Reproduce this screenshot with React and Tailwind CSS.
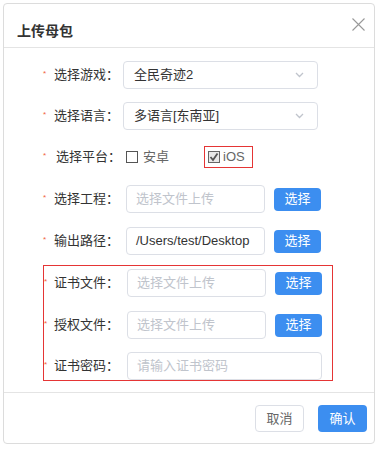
import React from "react";

const font = { fontFamily: '"Liberation Sans", "Noto Sans CJK SC", sans-serif' };

function Star({ w = "w-[11px]" }) {
  return (
    <span className={`${w} shrink-0 self-start pt-[9px] text-[8px] leading-[8px] text-[#f0643c]`}>*</span>
  );
}

function Chevron() {
  return (
    <svg width="9" height="6" viewBox="0 0 9 6" className="mr-[13px]">
      <polyline points="1,1 4.5,4.5 8,1" fill="none" stroke="#c0c4cc" strokeWidth="1.3" />
    </svg>
  );
}

function SelectBtn() {
  return (
    <button className="ml-[9px] flex h-[23px] w-[47px] items-center justify-center rounded-[4px] bg-[#3c8ef0] text-[13px] text-white">
      选择
    </button>
  );
}

function Input({ text, placeholder, w = "w-[139px]" }) {
  return (
    <div className={`flex h-[28px] ${w} items-center rounded-[4px] border border-[#dcdfe6] pl-[9px] text-[13px]`}>
      {text ? <span className="text-[#333]">{text}</span> : <span className="text-[#c0c4cc]">{placeholder}</span>}
    </div>
  );
}

export default function App() {
  return (
    <div className="h-[451px] w-[380px] bg-white pl-[3px] pt-[3px]" style={font}>
      <div className="flex h-[441px] w-[372px] flex-col rounded-[4px] border border-[#dcdcdc] bg-white">
        {/* header */}
        <div className="flex h-[44px] items-start justify-between border-b border-[#e4e4e4]">
          <div className="pl-[13px] pt-[17px] text-[14px] font-bold leading-[20px] text-[#333]">上传母包</div>
          <svg width="13" height="13" viewBox="0 0 13 13" className="mr-[9px] mt-[14px]">
            <path d="M0.5 0.5 L12.5 12.5 M12.5 0.5 L0.5 12.5" stroke="#999" strokeWidth="1.1" />
          </svg>
        </div>

        {/* body */}
        <div className="flex flex-col pl-[39px] pt-[13px] text-[13px] text-[#333]">
          <div className="flex h-[28px] items-center">
            <Star />
            <span className="w-[69px]">选择游戏：</span>
            <div className="flex h-[28px] w-[195px] items-center justify-between rounded-[4px] border border-[#dcdfe6] pl-[10px]">
              <span>全民奇迹2</span>
              <Chevron />
            </div>
          </div>

          <div className="mt-[13px] flex h-[28px] items-center">
            <Star />
            <span className="w-[69px]">选择语言：</span>
            <div className="flex h-[28px] w-[195px] items-center justify-between rounded-[4px] border border-[#dcdfe6] pl-[10px]">
              <span>多语言[东南亚]</span>
              <Chevron />
            </div>
          </div>

          <div className="mt-[13px] flex h-[28px] items-center">
            <Star />
            <span className="w-[72px] pl-[2px]">选择平台：</span>
            <span className="h-[12px] w-[12px] border border-[#555] bg-white"></span>
            <span className="ml-[5px] text-[#666]">安卓</span>
            <div className="ml-[35px] flex h-[22px] w-[49px] items-center border border-[#e53535] pl-[3px]">
              <span className="flex h-[12px] w-[12px] items-center justify-center border border-[#666] bg-[#e8e8e8]">
                <svg width="10" height="10" viewBox="0 0 10 10">
                  <polyline points="1.5,5 4,8 8.5,1.5" fill="none" stroke="#555" strokeWidth="1.8" />
                </svg>
              </span>
              <span className="ml-[3px] text-[#666]">iOS</span>
            </div>
          </div>

          <div className="mt-[14px] flex h-[28px] items-center">
            <Star />
            <span className="w-[72px]">选择工程：</span>
            <Input placeholder="选择文件上传" />
            <SelectBtn />
          </div>

          <div className="mt-[14px] flex h-[28px] items-center">
            <Star />
            <span className="w-[72px]">输出路径：</span>
            <Input text="/Users/test/Desktop" />
            <SelectBtn />
          </div>

          <div className="mt-[10px] flex w-[290px] flex-col border border-b-0 border-[#e53535] pt-[3px]">
            <div className="flex h-[28px] items-center">
              <Star w="w-[10px]" />
              <span className="w-[73px]">证书文件：</span>
              <Input placeholder="选择文件上传" />
              <SelectBtn />
            </div>
            <div className="mt-[14px] flex h-[28px] items-center">
              <Star w="w-[10px]" />
              <span className="w-[73px]">授权文件：</span>
              <Input placeholder="选择文件上传" />
              <SelectBtn />
            </div>
            <div className="mt-[13px] flex h-[28px] items-center">
              <Star w="w-[10px]" />
              <span className="w-[73px]">证书密码：</span>
              <Input placeholder="请输入证书密码" w="w-[195px]" />
            </div>
            <div className="h-[1px] w-full bg-[#e53535]"></div>
          </div>
        </div>

        {/* footer */}
        <div className="mt-[11px] flex justify-end gap-[14px] border-t border-[#e4e4e4] pr-[7px] pt-[12px]">
          <button className="flex h-[27px] w-[49px] items-center justify-center rounded-[4px] border border-[#dcdfe6] bg-white text-[13px] text-[#666]">
            取消
          </button>
          <button className="flex h-[27px] w-[49px] items-center justify-center rounded-[4px] bg-[#3c8ef0] text-[13px] text-white">
            确认
          </button>
        </div>
      </div>
    </div>
  );
}
